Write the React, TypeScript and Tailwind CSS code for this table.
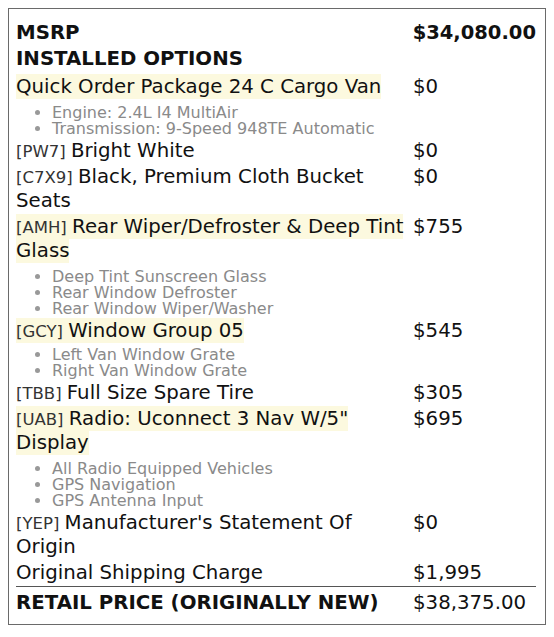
const options = [
  {
    code: "",
    name: "Quick Order Package 24 C Cargo Van",
    price: "$0",
    hl: true,
    items: ["Engine: 2.4L I4 MultiAir", "Transmission: 9-Speed 948TE Automatic"],
  },
  { code: "[PW7]", name: "Bright White", price: "$0", hl: false, items: [] },
  { code: "[C7X9]", name: "Black, Premium Cloth Bucket Seats", price: "$0", hl: false, items: [] },
  {
    code: "[AMH]",
    name: "Rear Wiper/Defroster & Deep Tint Glass",
    price: "$755",
    hl: true,
    items: ["Deep Tint Sunscreen Glass", "Rear Window Defroster", "Rear Window Wiper/Washer"],
  },
  {
    code: "[GCY]",
    name: "Window Group 05",
    price: "$545",
    hl: true,
    tight: true,
    items: ["Left Van Window Grate", "Right Van Window Grate"],
  },
  { code: "[TBB]", name: "Full Size Spare Tire", price: "$305", hl: false, items: [] },
  {
    code: "[UAB]",
    name: 'Radio: Uconnect 3 Nav W/5" Display',
    price: "$695",
    hl: true,
    items: ["All Radio Equipped Vehicles", "GPS Navigation", "GPS Antenna Input"],
  },
  { code: "[YEP]", name: "Manufacturer's Statement Of Origin", price: "$0", hl: false, items: [] },
];

type Option = {
  code: string;
  name: string;
  price: string;
  hl: boolean;
  tight?: boolean;
  items: string[];
};

const OptionRow = ({ opt }: { opt: Option }) => (
  <div className="flex py-[1px]">
    <div className="w-[397px] pr-[4px]">
      <div className="leading-[24px]">
        <span className={opt.hl ? "bg-[#fcf9df] py-[1px] box-decoration-clone" : ""}>
          {opt.code && <span className="text-[16.5px] leading-none text-[#333]">{opt.code} </span>}
          {opt.name}
        </span>
      </div>
      {opt.items.length > 0 && (
        <ul
          className={`${opt.tight ? "mt-[4px]" : "mt-[6px]"} pl-[36px] list-disc text-[16px] leading-[16px] text-[#8a8a8a] marker:text-[#999]`}
        >
          {opt.items.map(item => (
            <li key={item}>{item}</li>
          ))}
        </ul>
      )}
    </div>
    <div className="flex-1 leading-[24px]">{opt.price}</div>
  </div>
);

export default function App() {
  return (
    <div className="bg-white w-[554px] h-[637px] p-2 font-['DejaVu_Sans',sans-serif] text-[19.75px] text-[#111]">
      <div className="border border-[#6a6a6a] pt-[11px] pb-[9px] pl-[7px] pr-[9px] w-[538px]">
        <div className="flex py-[1px] font-bold leading-[24px]">
          <div className="w-[397px]">MSRP</div>
          <div className="flex-1 text-[19.5px]">$34,080.00</div>
        </div>
        <div className="pt-[1px] pb-[3px] font-bold leading-[24px]">INSTALLED OPTIONS</div>

        {options.map(opt => (
          <OptionRow key={opt.name} opt={opt} />
        ))}

        <div className="flex py-[1px] leading-[24px]">
          <div className="w-[397px]">Original Shipping Charge</div>
          <div className="flex-1">$1,995</div>
        </div>
        <div className="flex border-t border-[#555] pt-[4px] leading-[24px]">
          <div className="w-[397px] font-bold">RETAIL PRICE (ORIGINALLY NEW)</div>
          <div className="flex-1">$38,375.00</div>
        </div>
      </div>
    </div>
  );
}
